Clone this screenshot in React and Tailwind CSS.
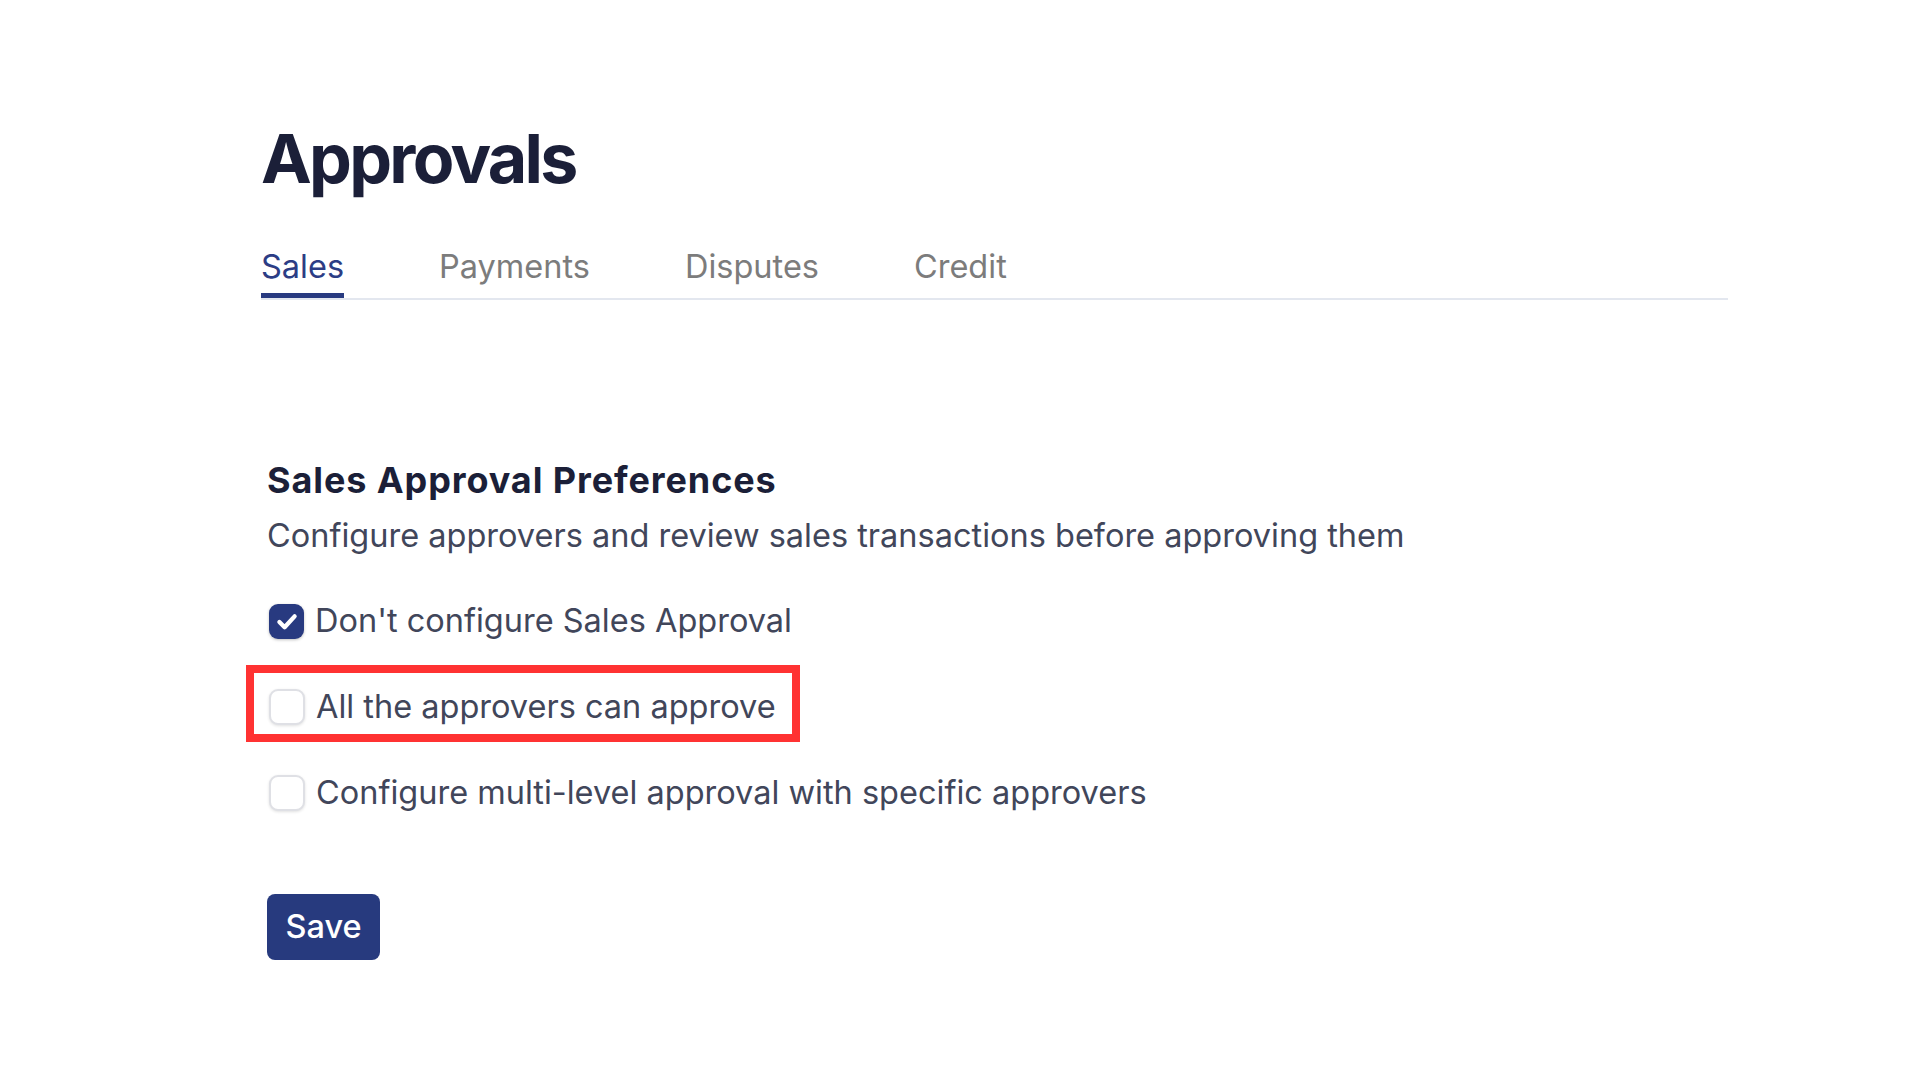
import React, { useState } from 'react';

const tabs = ['Sales', 'Payments', 'Disputes', 'Credit'];

const options = [
    { id: 'none', label: "Don't configure Sales Approval" },
    { id: 'all', label: 'All the approvers can approve', highlight: true },
    { id: 'multi', label: 'Configure multi-level approval with specific approvers' },
];

function Checkbox({ checked }) {
    if (checked) {
        return (
            <span className="flex h-[35px] w-[35px] shrink-0 items-center justify-center rounded-[9px] bg-[#283a80] shadow-[0_1px_3px_rgba(0,0,0,0.25)]">
                <svg width="26" height="26" viewBox="0 0 24 24" fill="none" stroke="white" strokeWidth="4" strokeLinecap="round" strokeLinejoin="round">
                    <path d="M5 12l4.8 4.8L19 6.8" />
                </svg>
            </span>
        );
    }
    return (
        <span className="block h-[36px] w-[36px] shrink-0 rounded-[9px] border-2 border-[#dfe0e5] bg-white shadow-[0_1px_3px_rgba(0,0,0,0.12)]" />
    );
}

export default function App() {
    const [activeTab, setActiveTab] = useState('Sales');
    const [selected, setSelected] = useState('none');

    return (
        <div className="min-h-screen bg-white font-['Inter',sans-serif]">
            <div className="pl-[261px] pr-[192px] pt-[124px]">
                <h1 className="text-[68px] font-bold leading-none tracking-[-0.04em] text-[#1b1f38]">Approvals</h1>

                {/* tabs */}
                <div className="mt-[59px] flex gap-[95px] border-b-2 border-[#e3e7ef]">
                    {tabs.map(t => (
                        <button key={t} onClick={() => setActiveTab(t)}
                            className={`pb-[9px] text-[32.5px] leading-none border-b-[5px] ${
                                activeTab === t ? 'border-[#283a80] text-[#2c3d85]' : 'border-transparent text-[#7c7c7c]'
                            }`}>
                            {t}
                        </button>
                    ))}
                </div>

                {/* section */}
                <div className="mt-[162px] pl-[6px]">
                    <h2 className="text-[36px] font-bold leading-none tracking-[0.025em] text-[#1b1f38]">Sales Approval Preferences</h2>
                    <p className="mt-[22px] text-[32.5px] leading-none text-[#41465a]">Configure approvers and review sales transactions before approving them</p>

                    <div className="mt-[52px] flex flex-col gap-[50px]">
                        {options.map(o => (
                            <div key={o.id} className="relative flex items-center gap-[11px] pl-[2px] cursor-pointer" onClick={() => setSelected(o.id)}>
                                <Checkbox checked={selected === o.id} />
                                <span className="text-[32.5px] leading-none text-[#41465a]">{o.label}</span>
                                {o.highlight && (
                                    <span className="pointer-events-none absolute left-[-21px] top-[-24px] h-[77px] w-[554px] border-[8px] border-[#ff3232]" />
                                )}
                            </div>
                        ))}
                    </div>

                    <button className="mt-[83px] h-[66px] w-[113px] rounded-[8px] bg-[#273a7e] text-[32.5px] font-medium leading-none text-white">
                        Save
                    </button>
                </div>
            </div>
        </div>
    );
}
